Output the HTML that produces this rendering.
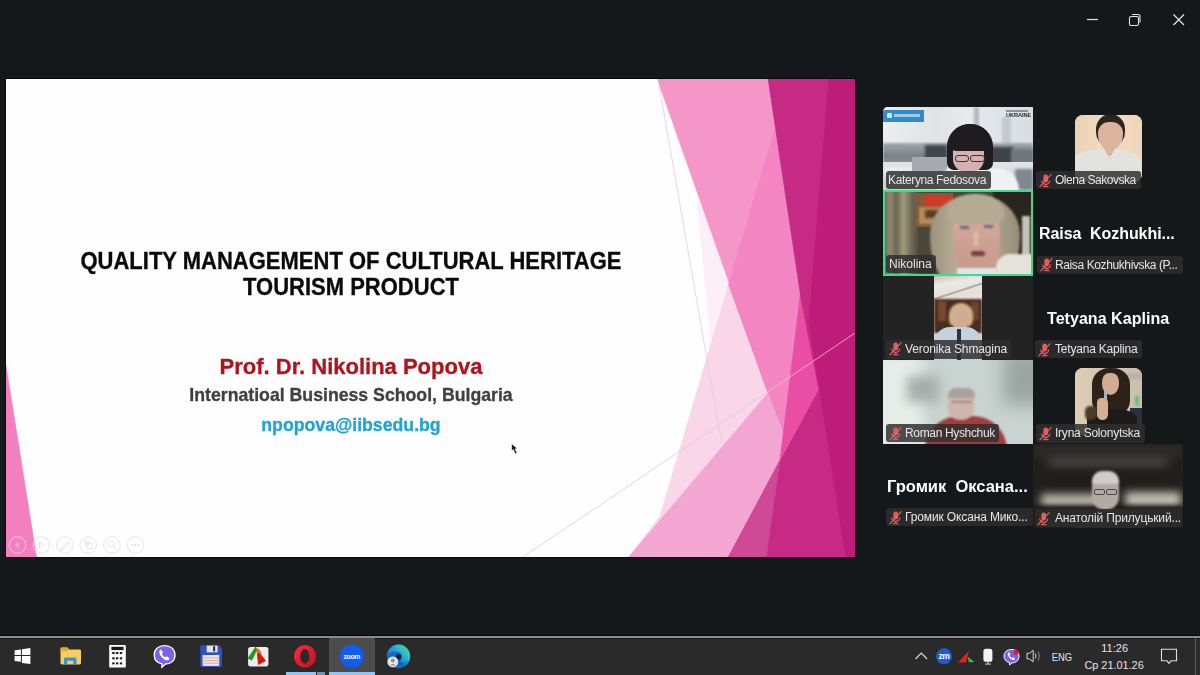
<!DOCTYPE html>
<html><head><meta charset="utf-8">
<style>
*{margin:0;padding:0;box-sizing:border-box}
html,body{width:1200px;height:675px;overflow:hidden;background:#14181b;font-family:"Liberation Sans",sans-serif}
.abs{position:absolute}
#slide{position:absolute;left:5.5px;top:79px;width:849px;height:478px;background:#fefefe;overflow:hidden;box-shadow:0 0 0 1px #090a0b}
#slide svg{position:absolute;left:0;top:0}
.t{position:absolute;white-space:nowrap;font-weight:bold;text-align:center;-webkit-text-stroke:0.3px currentColor;will-change:transform}
.tile{position:absolute;width:150px;height:84px;overflow:hidden}
.lb{position:absolute;background:rgba(46,46,46,0.84);border-radius:3px}
.lt{position:absolute;color:#e6e6e6;white-space:nowrap;will-change:transform}
.bign{position:absolute;color:#fff;font-weight:bold;font-size:16px;white-space:nowrap;will-change:transform}
#taskbar{position:absolute;left:0;top:635px;width:1200px;height:40px;background:#2a2a2a}
</style></head><body>

<!-- window controls -->
<svg class="abs" style="left:1080px;top:8px" width="115" height="24" viewBox="0 0 115 24">
  <line x1="7" y1="11.5" x2="18" y2="11.5" stroke="#e6e6e6" stroke-width="1.2"/>
  <rect x="49.5" y="8.5" width="9" height="9" rx="1.5" fill="none" stroke="#e6e6e6" stroke-width="1.1"/>
  <path d="M52 6.5 h6 a2 2 0 0 1 2 2 v6" fill="none" stroke="#e6e6e6" stroke-width="1.1"/>
  <path d="M93.5 6.5 L104 17 M104 6.5 L93.5 17" stroke="#e6e6e6" stroke-width="1.2"/>
</svg>

<div id="slide">
<svg width="849" height="478" viewBox="6 79 849 478">
  <g stroke-width="0.7" stroke-linejoin="round">
  <polygon points="5,359.5 5,558 36.6,558" fill="#f47fbf" stroke="#f47fbf"/>
  <polygon points="697,200 760,200 760,345 711,345" fill="#fdeff7" stroke="#fdeff7"/>
  <polygon points="728.6,284.6 800,400 740,558 628,558 660,516" fill="#fad6e9" stroke="#fad6e9"/>
  <polygon points="657,78 856,78 856,558 740,558 780,460 768,393" fill="#f596c9" stroke="#f596c9"/>
  <polygon points="775,129 830,129 830,470 780,460 768,393 728.6,284.6" fill="#f285c2" stroke="#f285c2"/>
  <polygon points="628,558 760,558 790,460 782,430 768,393" fill="#f4a6d3" stroke="#f4a6d3"/>
  <polygon points="801,290 840,390 790,470 780,460" fill="#ea4ea4" stroke="#ea4ea4"/>
  <polygon points="768,78 856,78 856,558 728,558 819,390 801,298" fill="#c62a84" stroke="#c62a84"/>
  <polygon points="728,558 766,558 780,460" fill="#cf4996" stroke="#cf4996"/>
  <polygon points="829,78 856,78 856,558 846,558 809,322" fill="#bd1c79" stroke="#bd1c79"/>
  </g>
  <line x1="658" y1="79" x2="722" y2="445" stroke="#e6cbd9" stroke-width="0.8"/>
  <line x1="523" y1="557" x2="855" y2="333" stroke="#dccbd4" stroke-width="0.8"/>
  <g fill="none" stroke="#dedede" stroke-width="0.9" opacity="0.85">
    <circle cx="17.5" cy="545" r="8.3"/><circle cx="41.3" cy="545" r="8.3"/><circle cx="64.8" cy="545" r="8.3"/>
    <circle cx="88.1" cy="545" r="8.3"/><circle cx="111.9" cy="545" r="8.3"/><circle cx="135.6" cy="545" r="8.3"/>
    <path d="M39.5 541.5 l3.5 3.5 l-3.5 3.5z"/>
    <path d="M61 549 l7 -7 l1.2 1.2 l-7 7z M61 549 l-0.6 1.8 l1.8 -0.6"/>
    <rect x="85" y="541.5" width="4" height="4"/><rect x="87" y="543.5" width="5" height="5"/>
    <circle cx="110.8" cy="543.8" r="3.2"/><path d="M113.2 546.2 l3 3"/>
  </g>
  <path d="M15 545 l3.5 -3 v6z" fill="#f6b2d8"/>
  <circle cx="17.5" cy="545" r="8.3" fill="none" stroke="#f9b6da" stroke-width="0.9"/>
  <g fill="#dcdcdc"><circle cx="132.6" cy="545" r="0.9"/><circle cx="135.6" cy="545" r="0.9"/><circle cx="138.6" cy="545" r="0.9"/></g>
  <path d="M511.8 443.9 L511.8 450.8 L513.4 449.3 L515.4 453.8 L516.9 453.1 L514.9 448.8 L517 448.6 Z" fill="#111" stroke="#fff" stroke-width="0.3"/>
</svg>
<div class="t" style="left:0;width:690px;top:170.4px;font-size:22px;line-height:24.06px;color:#0a0a0a;transform:scaleY(1.06);transform-origin:0 0">QUALITY MANAGEMENT OF CULTURAL HERITAGE<br>TOURISM PRODUCT</div>
<div class="t" style="left:0;width:690px;top:275px;font-size:22px;line-height:26px;color:#b0131c">Prof. Dr. Nikolina Popova</div>
<div class="t" style="left:0;width:690px;top:305.9px;font-size:17.7px;line-height:20px;color:#404040">Internatioal Business School, Bulgaria</div>
<div class="t" style="left:0;width:690px;top:335.6px;font-size:17.7px;line-height:20px;color:#1fa3d9">npopova@iibsedu.bg</div>
</div>

<!-- gallery -->
<div id="gallery">
  <!-- T1 Kateryna -->
  <div class="tile" style="left:883px;top:107px;height:83px;border-top-left-radius:5px;background:#e1e4e7">
    <div class="abs" style="left:0;top:0;width:150px;height:42px;background:linear-gradient(90deg,#eceef0 0,#dfe3e6 35%,#e8ebee 55%,#d9dde1 100%)"></div>
    <div class="abs" style="left:91px;top:0;width:5px;height:44px;background:#b3b9bf;filter:blur(0.8px)"></div>
    <div class="abs" style="left:119px;top:10px;width:9px;height:34px;background:#c5cacf;filter:blur(1.2px)"></div>
    <div class="abs" style="left:0;top:36px;width:150px;height:22px;background:linear-gradient(180deg,#a2a8ae,#7a8189 60%,#8d949b);filter:blur(1.2px)"></div>
    <div class="abs" style="left:42px;top:38px;width:22px;height:16px;background:#3f464e;filter:blur(1.5px)"></div>
    <div class="abs" style="left:108px;top:40px;width:22px;height:22px;background:#3c434b;filter:blur(1.5px)"></div>
    <div class="abs" style="left:128px;top:42px;width:22px;height:14px;background:#6f767d;filter:blur(1.5px)"></div>
    <div class="abs" style="left:0;top:55px;width:150px;height:28px;background:linear-gradient(180deg,#e1e4e8,#cdd1d6)"></div>
    <div class="abs" style="left:2px;top:60px;width:30px;height:10px;background:#e9ecef;filter:blur(1px)"></div>
    <div class="abs" style="left:132px;top:62px;width:18px;height:21px;background:#7f8790;filter:blur(1.5px)"></div>
    <div class="abs" style="left:29px;top:50px;width:35px;height:14px;background:#a7aaae;filter:blur(0.5px)"></div>
    <div class="abs" style="left:54px;top:61px;width:82px;height:26px;background:#f0f1f3;border-radius:18px 22px 0 0;filter:blur(0.8px)"></div>
    <div class="abs" style="left:63.5px;top:17px;width:46px;height:46px;background:#1e1c1f;border-radius:50% 50% 14% 14% / 48% 48% 16% 16%;filter:blur(0.6px)"></div>
    <div class="abs" style="left:70px;top:37px;width:31px;height:28px;background:#d4b2b0;border-radius:5px 5px 13px 13px;filter:blur(0.5px)"></div>
    <div class="abs" style="left:67px;top:17px;width:40px;height:27px;background:#1e1c1f;border-radius:50% 50% 3px 6px / 60% 60% 3px 6px;filter:blur(0.4px)"></div>
    <div class="abs" style="left:72px;top:47.5px;width:14px;height:7px;border:1.6px solid #3b2f38;border-radius:3px"></div>
    <div class="abs" style="left:87px;top:47.5px;width:15px;height:7px;border:1.6px solid #3b2f38;border-radius:3px"></div>
    <div class="abs" style="left:0;top:3px;width:41px;height:11.7px;background:#2f8cc7"></div>
    <div class="abs" style="left:4px;top:6px;width:5px;height:5px;background:#cfe6f5;border-radius:1px"></div>
    <div class="abs" style="left:11px;top:7px;width:26px;height:3px;background:#9ccbeb"></div>
    <div class="abs" style="left:123px;top:3px;width:22px;height:1.5px;background:#8f9297"></div>
    <div class="abs" style="left:122.5px;top:5px;width:26px;height:7px;font:bold 5.7px/7px 'Liberation Sans';color:#262a33;letter-spacing:-0.1px;will-change:transform">UKRAINE</div>
  </div>
  <!-- T2 Nikolina -->
  <div class="tile" style="left:883px;top:190px;height:86px;background:#4c463a">
    <div class="abs" style="left:0;top:0;width:35px;height:86px;background:linear-gradient(90deg,#665e4c 0,#958d72 20%,#6a634f 38%,#a39c82 58%,#746c57 80%,#544d40 100%);filter:blur(1.2px)"></div>
    <div class="abs" style="left:110px;top:0;width:40px;height:70px;background:#2a261f;filter:blur(1px)"></div>
    <div class="abs" style="left:139px;top:26px;width:8px;height:40px;background:#c4c3ba;filter:blur(1.2px)"></div>
    <div class="abs" style="left:32px;top:3px;width:38px;height:34px;background:#7d5c38;filter:blur(0.6px)"></div>
    <div class="abs" style="left:41px;top:5px;width:28px;height:12px;background:#cf3a2b;filter:blur(0.9px)"></div>
    <div class="abs" style="left:36px;top:17px;width:28px;height:17px;background:#b58d5c;filter:blur(1.2px)"></div>
    <div class="abs" style="left:42px;top:20px;width:14px;height:8px;background:#5a3a28;filter:blur(1.5px)"></div>
    <div class="abs" style="left:47px;top:4px;width:90px;height:95px;background:linear-gradient(90deg,#9d927d,#b8ad97 30%,#aea38d 70%,#978c78);border-radius:50% 50% 35% 35% / 42% 42% 55% 55%;filter:blur(1.1px)"></div>
    <div class="abs" style="left:70px;top:20px;width:47px;height:68px;background:linear-gradient(180deg,#d6ae9e 0,#cca191 50%,#c49a8a 100%);border-radius:42% 42% 45% 45% / 30% 30% 42% 42%;filter:blur(0.8px)"></div>
    <div class="abs" style="left:64px;top:5px;width:58px;height:29px;background:#b5aa94;border-radius:50% 50% 22% 22% / 70% 70% 30% 30%;filter:blur(0.9px)"></div>
    <div class="abs" style="left:77px;top:36px;width:9px;height:3px;background:#69698a;filter:blur(0.9px)"></div>
    <div class="abs" style="left:101px;top:35px;width:9px;height:3px;background:#69698a;filter:blur(0.9px)"></div>
    <div class="abs" style="left:90px;top:42px;width:6px;height:14px;background:#dcb6a6;filter:blur(1.2px)"></div>
    <div class="abs" style="left:88px;top:61px;width:14px;height:5px;background:#7a3c46;border-radius:3px;filter:blur(0.8px)"></div>
    <div class="abs" style="left:113px;top:64px;width:37px;height:22px;background:#e6e3dc;border-radius:14px 0 0 0;filter:blur(1px)"></div>
    <div class="abs" style="left:74px;top:78px;width:40px;height:8px;background:#dfe5ee;filter:blur(1px)"></div>
    <div class="abs" style="left:0;top:0;width:150px;height:86px;border:2.4px solid #3ddc8a"></div>
  </div>
  <!-- T3 Veronika -->
  <div class="tile" style="left:883px;top:276px;background:#232323">
    <div class="abs" style="left:51.4px;top:0;width:47.6px;height:84px;overflow:hidden;background:#ddd6ce">
      <div class="abs" style="left:0;top:0;width:48px;height:30px;background:linear-gradient(170deg,#c9c0b6 0,#ece8e4 25%,#e4dfda 60%,#f0ece8 100%)"></div>
      <div class="abs" style="left:-5px;top:14px;width:60px;height:1.5px;background:#b5aba0;transform:rotate(-18deg);filter:blur(0.4px)"></div>
      <div class="abs" style="left:0;top:23px;width:48px;height:34px;background:#4b2e22;filter:blur(1px)"></div>
      <div class="abs" style="left:4px;top:25px;width:8px;height:20px;background:#7a4a30;filter:blur(1.2px)"></div>
      <div class="abs" style="left:37px;top:26px;width:8px;height:18px;background:#6c4430;filter:blur(1.2px)"></div>
      <div class="abs" style="left:15px;top:27px;width:24px;height:24px;background:#cdb486;border-radius:50% 50% 30% 30%;filter:blur(0.9px)"></div>
      <div class="abs" style="left:19px;top:34px;width:15px;height:20px;background:#d3a995;border-radius:40%;filter:blur(0.6px)"></div>
      <div class="abs" style="left:0;top:51px;width:48px;height:33px;background:#c3d2de;border-radius:16px 16px 0 0;filter:blur(0.5px)"></div>
      <div class="abs" style="left:23px;top:53px;width:4px;height:31px;background:#2f3136"></div>
    </div>
  </div>
  <!-- T4 Roman -->
  <div class="tile" style="left:883px;top:360px;background:#c9d3cf">
    <div class="abs" style="left:-15px;top:-5px;width:55px;height:94px;background:#e6eeea;filter:blur(7px)"></div>
    <div class="abs" style="left:120px;top:-10px;width:45px;height:55px;background:#9aa5a1;filter:blur(9px)"></div>
    <div class="abs" style="left:24px;top:16px;width:32px;height:26px;background:#a3ada9;filter:blur(6px)"></div>
    <div class="abs" style="left:42px;top:56px;width:82px;height:34px;background:#a33d3d;border-radius:40px 40px 0 0;filter:blur(1px)"></div>
    <div class="abs" style="left:65px;top:29px;width:26px;height:31px;background:#cfb5ab;border-radius:11px 11px 12px 12px;filter:blur(0.8px)"></div>
    <div class="abs" style="left:65px;top:27.5px;width:27px;height:10px;background:#a9a49e;border-radius:14px 14px 4px 4px;filter:blur(0.8px)"></div>
    <div class="abs" style="left:69px;top:41px;width:19px;height:2px;background:#a08c86;filter:blur(0.8px)"></div>
  </div>
  <!-- C2 T1 Olena -->
  <div class="abs" style="left:1075px;top:115px;width:67px;height:67px;border-radius:8px;overflow:hidden;background:#efd7bb">
    <div class="abs" style="left:0;top:0;width:67px;height:67px;background:linear-gradient(90deg,#ecd2b4,#f2dcc2 50%,#eed6ba)"></div>
    <div class="abs" style="left:20.5px;top:-1px;width:29px;height:30px;background:#2b2522;border-radius:50% 50% 30% 30% / 50% 50% 40% 40%"></div>
    <div class="abs" style="left:22.5px;top:7px;width:25px;height:28px;background:#dcb49c;border-radius:45% 45% 50% 50% / 40% 40% 55% 55%;filter:blur(0.4px)"></div>
    <div class="abs" style="left:-4px;top:34px;width:70px;height:45px;background:#e2e3df;border-radius:45% 45% 0 0 / 30% 30% 0 0;filter:blur(0.4px)"></div>
    <div class="abs" style="left:27px;top:30px;width:15px;height:14px;background:#d9b5a0;clip-path:polygon(0 0,100% 0,50% 100%)"></div>
    <div class="abs" style="left:30px;top:34px;width:9px;height:8px;border-bottom:1px solid #f3efe6;border-radius:0 0 50% 50%"></div>
      </div>
  <!-- C2 T4 Iryna -->
  <div class="abs" style="left:1075px;top:368px;width:67px;height:67px;border-radius:8px;overflow:hidden;background:#d8c9b2">
    <div class="abs" style="left:0;top:0;width:67px;height:67px;background:linear-gradient(90deg,#ddcdb4 0,#d6c6ae 45%,#c9bfb0 100%)"></div>
    <div class="abs" style="left:46px;top:5px;width:21px;height:6px;background:#b9b2a6;filter:blur(1px)"></div>
    <div class="abs" style="left:55px;top:40px;width:12px;height:27px;background:#2a3140;filter:blur(0.6px)"></div>
    <div class="abs" style="left:60px;top:28px;width:4px;height:10px;background:#6dbf80;filter:blur(0.8px)"></div>
    <div class="abs" style="left:17px;top:0;width:38px;height:46px;background:#2d2119;border-radius:45% 45% 30% 30% / 35% 35% 30% 30%;filter:blur(0.7px)"></div>
    <div class="abs" style="left:27px;top:5px;width:17px;height:22px;background:#d2ab93;border-radius:40% 40% 50% 50%;filter:blur(0.5px)"></div>
    <div class="abs" style="left:12px;top:41px;width:50px;height:30px;background:#1d1b19;border-radius:40% 40% 0 0 / 35% 35% 0 0;filter:blur(0.5px)"></div>
    <div class="abs" style="left:10px;top:38px;width:12px;height:14px;background:#4a3a2c;border-radius:5px;filter:blur(0.8px)"></div>
    <div class="abs" style="left:22px;top:30px;width:11px;height:22px;background:#d6ae92;border-radius:5px 5px 6px 6px;filter:blur(0.5px)"></div>
    <div class="abs" style="left:29px;top:22px;width:3px;height:10px;background:#a9b0b8;border-radius:1px;filter:blur(0.3px)"></div>
  </div>
  <!-- C2 T5 Anatoliy -->
  <div class="tile" style="left:1033px;top:444px;background:#22211e">
    <div class="abs" style="left:0;top:0;width:150px;height:14px;background:#2b2a27;filter:blur(3px)"></div>
    <div class="abs" style="left:15px;top:13px;width:120px;height:12px;background:#48443d;filter:blur(5px)"></div>
    <div class="abs" style="left:0;top:26px;width:150px;height:20px;background:#1f1e1b;filter:blur(4px)"></div>
    <div class="abs" style="left:8px;top:50px;width:62px;height:13px;background:#bdb8ae;filter:blur(4px)"></div>
    <div class="abs" style="left:92px;top:48px;width:56px;height:15px;background:#c4bfb4;filter:blur(4px)"></div>
    <div class="abs" style="left:0;top:62px;width:150px;height:22px;background:#1c1b19;filter:blur(2px)"></div>
    <div class="abs" style="left:38px;top:65px;width:76px;height:24px;background:#2b2a28;border-radius:30px 30px 0 0;filter:blur(0.8px)"></div>
    <div class="abs" style="left:58.5px;top:30px;width:27px;height:36px;background:#b3aaa5;border-radius:12px 12px 13px 13px;filter:blur(0.8px)"></div>
    <div class="abs" style="left:58.5px;top:27px;width:27px;height:13px;background:#cfcdca;border-radius:13px 13px 4px 4px;filter:blur(0.9px)"></div>
    <div class="abs" style="left:61px;top:45px;width:11px;height:6px;border:1.2px solid #4e4642;border-radius:2px"></div>
    <div class="abs" style="left:73px;top:45px;width:11px;height:6px;border:1.2px solid #4e4642;border-radius:2px"></div>
  </div>

<div class="lb" style="left:885.5px;top:171.2px;width:105.3px;height:17.8px"></div><div class="lt" style="left:888.4px;top:173.14px;font-size:12px;line-height:14.4px;letter-spacing:-0.36px">Kateryna Fedosova</div><div class="lb" style="left:886.0px;top:255.3px;width:50.0px;height:17.4px"></div><div class="lt" style="left:888.5px;top:257.34px;font-size:12px;line-height:14.4px;letter-spacing:0.0px">Nikolina</div><div class="lb" style="left:886.0px;top:339.7px;width:124.7px;height:19.0px"></div><svg class="abs" style="left:888.5px;top:342.3px" width="13" height="14" viewBox="0 0 13 14"><rect x="4.3" y="0.6" width="4.8" height="8" rx="2.4" fill="#e35a5a"/><path d="M2.7 6.4 a4 4 0 0 0 8 0" fill="none" stroke="#e35a5a" stroke-width="1.2"/><rect x="6.1" y="10.2" width="1.3" height="2" fill="#e35a5a"/><rect x="3.9" y="11.9" width="5.6" height="1.3" fill="#e35a5a"/><line x1="0.6" y1="13.2" x2="12.4" y2="0.4" stroke="#e46a6a" stroke-width="1.1"/></svg><div class="lt" style="left:904.5px;top:342.24px;font-size:12px;line-height:14.4px;letter-spacing:-0.12px">Veronika Shmagina</div><div class="lb" style="left:886.0px;top:424.0px;width:112.7px;height:18.0px"></div><svg class="abs" style="left:888.5px;top:426.6px" width="13" height="14" viewBox="0 0 13 14"><rect x="4.3" y="0.6" width="4.8" height="8" rx="2.4" fill="#e35a5a"/><path d="M2.7 6.4 a4 4 0 0 0 8 0" fill="none" stroke="#e35a5a" stroke-width="1.2"/><rect x="6.1" y="10.2" width="1.3" height="2" fill="#e35a5a"/><rect x="3.9" y="11.9" width="5.6" height="1.3" fill="#e35a5a"/><line x1="0.6" y1="13.2" x2="12.4" y2="0.4" stroke="#e46a6a" stroke-width="1.1"/></svg><div class="lt" style="left:905.2px;top:426.34px;font-size:12px;line-height:14.4px;letter-spacing:-0.34px">Roman Hyshchuk</div><div class="lb" style="left:886.0px;top:508.3px;width:146.5px;height:18.2px"></div><svg class="abs" style="left:888.5px;top:510.90000000000003px" width="13" height="14" viewBox="0 0 13 14"><rect x="4.3" y="0.6" width="4.8" height="8" rx="2.4" fill="#e35a5a"/><path d="M2.7 6.4 a4 4 0 0 0 8 0" fill="none" stroke="#e35a5a" stroke-width="1.2"/><rect x="6.1" y="10.2" width="1.3" height="2" fill="#e35a5a"/><rect x="3.9" y="11.9" width="5.6" height="1.3" fill="#e35a5a"/><line x1="0.6" y1="13.2" x2="12.4" y2="0.4" stroke="#e46a6a" stroke-width="1.1"/></svg><div class="lt" style="left:905.0px;top:510.39px;font-size:12px;line-height:14.4px;letter-spacing:-0.13px">Громик Оксана Мико...</div><div class="lb" style="left:1036.0px;top:171.3px;width:105.3px;height:17.4px"></div><svg class="abs" style="left:1038.5px;top:173.9px" width="13" height="14" viewBox="0 0 13 14"><rect x="4.3" y="0.6" width="4.8" height="8" rx="2.4" fill="#e35a5a"/><path d="M2.7 6.4 a4 4 0 0 0 8 0" fill="none" stroke="#e35a5a" stroke-width="1.2"/><rect x="6.1" y="10.2" width="1.3" height="2" fill="#e35a5a"/><rect x="3.9" y="11.9" width="5.6" height="1.3" fill="#e35a5a"/><line x1="0.6" y1="13.2" x2="12.4" y2="0.4" stroke="#e46a6a" stroke-width="1.1"/></svg><div class="lt" style="left:1055.2px;top:173.34px;font-size:12px;line-height:14.4px;letter-spacing:-0.48px">Olena Sakovska</div><div class="lb" style="left:1037.1px;top:255.6px;width:145.9px;height:18.4px"></div><svg class="abs" style="left:1039.6px;top:258.2px" width="13" height="14" viewBox="0 0 13 14"><rect x="4.3" y="0.6" width="4.8" height="8" rx="2.4" fill="#e35a5a"/><path d="M2.7 6.4 a4 4 0 0 0 8 0" fill="none" stroke="#e35a5a" stroke-width="1.2"/><rect x="6.1" y="10.2" width="1.3" height="2" fill="#e35a5a"/><rect x="3.9" y="11.9" width="5.6" height="1.3" fill="#e35a5a"/><line x1="0.6" y1="13.2" x2="12.4" y2="0.4" stroke="#e46a6a" stroke-width="1.1"/></svg><div class="lt" style="left:1055.0px;top:257.64px;font-size:12px;line-height:14.4px;letter-spacing:-0.39px">Raisa Kozhukhivska (P...</div><div class="lb" style="left:1035.4px;top:340.3px;width:106.7px;height:17.3px"></div><svg class="abs" style="left:1037.9px;top:342.90000000000003px" width="13" height="14" viewBox="0 0 13 14"><rect x="4.3" y="0.6" width="4.8" height="8" rx="2.4" fill="#e35a5a"/><path d="M2.7 6.4 a4 4 0 0 0 8 0" fill="none" stroke="#e35a5a" stroke-width="1.2"/><rect x="6.1" y="10.2" width="1.3" height="2" fill="#e35a5a"/><rect x="3.9" y="11.9" width="5.6" height="1.3" fill="#e35a5a"/><line x1="0.6" y1="13.2" x2="12.4" y2="0.4" stroke="#e46a6a" stroke-width="1.1"/></svg><div class="lt" style="left:1054.8px;top:341.94px;font-size:12px;line-height:14.4px;letter-spacing:-0.2px">Tetyana Kaplina</div><div class="lb" style="left:1036.0px;top:424.3px;width:108.7px;height:18.4px"></div><svg class="abs" style="left:1038.5px;top:426.90000000000003px" width="13" height="14" viewBox="0 0 13 14"><rect x="4.3" y="0.6" width="4.8" height="8" rx="2.4" fill="#e35a5a"/><path d="M2.7 6.4 a4 4 0 0 0 8 0" fill="none" stroke="#e35a5a" stroke-width="1.2"/><rect x="6.1" y="10.2" width="1.3" height="2" fill="#e35a5a"/><rect x="3.9" y="11.9" width="5.6" height="1.3" fill="#e35a5a"/><line x1="0.6" y1="13.2" x2="12.4" y2="0.4" stroke="#e46a6a" stroke-width="1.1"/></svg><div class="lt" style="left:1054.9px;top:426.44px;font-size:12px;line-height:14.4px;letter-spacing:-0.23px">Iryna Solonytska</div><div class="lb" style="left:1034.8px;top:508.9px;width:147.7px;height:17.9px"></div><svg class="abs" style="left:1037.3px;top:511.5px" width="13" height="14" viewBox="0 0 13 14"><rect x="4.3" y="0.6" width="4.8" height="8" rx="2.4" fill="#e35a5a"/><path d="M2.7 6.4 a4 4 0 0 0 8 0" fill="none" stroke="#e35a5a" stroke-width="1.2"/><rect x="6.1" y="10.2" width="1.3" height="2" fill="#e35a5a"/><rect x="3.9" y="11.9" width="5.6" height="1.3" fill="#e35a5a"/><line x1="0.6" y1="13.2" x2="12.4" y2="0.4" stroke="#e46a6a" stroke-width="1.1"/></svg><div class="lt" style="left:1055.0px;top:510.64px;font-size:12px;line-height:14.4px;letter-spacing:-0.15px">Анатолій Прилуцький...</div><div class="bign" style="left:1039.4px;top:223.86px;font-size:16px;line-height:19.2px;letter-spacing:-0.07px">Raisa&nbsp; Kozhukhi...</div><div class="bign" style="left:1046.5px;top:309.16px;font-size:16.1px;line-height:19.32px;letter-spacing:0px">Tetyana Kaplina</div><div class="bign" style="left:887.1px;top:476.88px;font-size:16.5px;line-height:19.8px;letter-spacing:0px">Громик&nbsp; Оксана...</div>
</div>
<div id="taskbar">
  <div class="abs" style="left:0;top:0;width:1200px;height:1px;background:#050607"></div>
  <div class="abs" style="left:0;top:1px;width:1200px;height:2px;background:#8c8c8c"></div>
  <div class="abs" style="left:0;top:3px;width:1200px;height:1px;background:#161616"></div>
  <div class="abs" style="left:329px;top:3px;width:46px;height:37px;background:#4c4c4c"></div>
  <div class="abs" style="left:329px;top:37px;width:46px;height:3px;background:#8fc5ee"></div>
  <div class="abs" style="left:286px;top:37px;width:30px;height:3px;background:#8fc5ee"></div>
  <div class="abs" style="left:317px;top:37px;width:8px;height:3px;background:#6d96b4"></div>
  <div class="abs" style="left:1195px;top:3px;width:1px;height:37px;background:#5c5c5c"></div>
</div>
<svg class="abs" style="left:0;top:637px" width="1200" height="38" viewBox="0 637 1200 38">
  <!-- windows logo -->
  <g fill="#ffffff">
    <polygon points="14.6,650.3 20.9,649.4 20.9,655.1 14.6,655.1"/>
    <polygon points="21.9,649.2 30.4,648 30.4,655.1 21.9,655.1"/>
    <polygon points="14.6,656.1 20.9,656.1 20.9,661.8 14.6,661"/>
    <polygon points="21.9,656.1 30.4,656.1 30.4,664.1 21.9,662.9"/>
  </g>
  <!-- folder -->
  <path d="M60.5 649 q0 -1.4 1.4 -1.4 h5.4 l2 1.8 h10.3 q1.4 0 1.4 1.4 v12.3 q0 1.4 -1.4 1.4 h-17.7 q-1.4 0 -1.4 -1.4z" fill="#f6cf5e"/>
  <path d="M60.5 649 q0 -1.4 1.4 -1.4 h5.4 l2 1.8 l-2 1.6 h-6.8z" fill="#e3a92a"/>
  <path d="M64 664.5 v-5.6 q0 -1.4 1.4 -1.4 h9.7 q1.4 0 1.4 1.4 v5.6 h-3.2 v-3.8 h-6.1 v3.8z" fill="#3e8fd3"/>
  <!-- calculator -->
  <rect x="109.2" y="644.9" width="16.6" height="22.7" rx="0.8" fill="#ffffff"/>
  <rect x="111.4" y="646.8" width="12.2" height="3.3" fill="#1a1a1a"/>
  <g fill="#1a1a1a">
    <rect x="112.2" y="652" width="2.4" height="2"/><rect x="115.9" y="652" width="2.4" height="2"/><rect x="119.8" y="652" width="2.4" height="2"/>
    <rect x="112.2" y="657.3" width="2.4" height="2"/><rect x="115.9" y="657.3" width="2.4" height="2"/><rect x="119.8" y="657.3" width="2.4" height="2"/>
    <rect x="112.2" y="662.4" width="2.4" height="2"/><rect x="115.9" y="662.4" width="2.4" height="2"/><rect x="119.8" y="662.4" width="2.4" height="2"/>
  </g>
  <!-- viber -->
  <path d="M164.6 645.6 c6.2 0 10.4 3.6 10.4 9.3 c0 5.6 -4 9.2 -9.8 9.3 l-3.3 3 v-3.3 c-4.6 -1 -7.7 -4.3 -7.7 -9 c0 -5.7 4.2 -9.3 10.4 -9.3z" fill="#7b62e8" stroke="#ffffff" stroke-width="1.3"/>
  <path d="M159.8 650.2 c0.6 -0.6 1.3 -0.6 1.7 0 l1.2 1.7 c0.3 0.5 0.2 1 -0.3 1.4 l-0.5 0.4 c0.6 1.6 1.8 2.9 3.4 3.6 l0.5 -0.5 c0.4 -0.4 0.9 -0.5 1.4 -0.2 l1.7 1.2 c0.6 0.4 0.6 1.1 0 1.7 l-0.8 0.8 c-3.2 0.6 -8.6 -4.4 -8.8 -8.4z" fill="#ffffff"/>
  <!-- floppy -->
  <path d="M200.3 646.3 q0 -1.1 1.1 -1.1 h17.6 l2.9 2.9 v17.7 q0 1.1 -1.1 1.1 h-19.4 q-1.1 0 -1.1 -1.1z" fill="#2f52c6"/>
  <rect x="206.7" y="645.6" width="10.8" height="6.7" fill="#e4e4e4"/>
  <rect x="213" y="646.3" width="2.2" height="5" fill="#2b3560"/>
  <rect x="202.6" y="655" width="16.6" height="10.9" fill="#f3e6e6"/>
  <g fill="#e4aaaa"><rect x="202.6" y="657.3" width="16.6" height="1"/><rect x="202.6" y="660" width="16.6" height="1"/><rect x="202.6" y="662.7" width="16.6" height="1"/></g>
  <!-- faststone -->
  <rect x="248.1" y="647" width="20.3" height="19.4" rx="2.5" fill="#ececec"/>
  <path d="M255.5 646.5 L257.5 649 L252 660.5 L247.5 658.5 Z" fill="#1f9a2a"/>
  <path d="M256.5 648.5 L266 661 L258 665 Z" fill="#d9150e"/>
  <path d="M256 648 L259.5 649.5 L262 654 L256.8 653 Z" fill="#e96a1a"/>
  <!-- opera -->
  <defs><linearGradient id="og" x1="0" y1="0" x2="1" y2="1"><stop offset="0" stop-color="#ff2a3a"/><stop offset="1" stop-color="#c0101e"/></linearGradient></defs><path fill-rule="evenodd" fill="url(#og)" d="M305 645 a11 11.25 0 1 0 0.01 0z M304.8 649 a4.5 7.4 0 1 0 0.01 0z"/>
  <!-- zoom -->
  <circle cx="351.8" cy="656.2" r="11.8" fill="#0d5cf3"/>
  <text x="351.8" y="658.5" text-anchor="middle" font-family="Liberation Sans" font-size="6.8" font-weight="bold" fill="#ffffff" letter-spacing="-0.3">zoom</text>
  <!-- edge -->
  <defs><linearGradient id="eg" x1="0" y1="1" x2="1" y2="0"><stop offset="0" stop-color="#0e4fa8"/><stop offset="0.45" stop-color="#1e8fd8"/><stop offset="0.7" stop-color="#2cc2d0"/><stop offset="1" stop-color="#62dc52"/></linearGradient></defs>
  <circle cx="398.5" cy="656.2" r="11.7" fill="url(#eg)"/>
  <path d="M387 656.5 c1.5 -3.5 5 -5 8.5 -5 c3.5 0 6.5 2.2 6.5 5.5 c0 1.5 -0.8 3 -2.3 3.6 c1.5 1.5 5 1.8 8 0.5 c-2 5 -6.5 7.5 -11 7.2 c-5 -0.3 -9 -4 -9.7 -11.8z" fill="#1466c8"/>
  <ellipse cx="398.6" cy="656.8" rx="2.6" ry="2.9" fill="#1c2630"/>
  <path d="M400 660 c2 1.4 6 1.6 9.3 -0.2 c-0.6 1.8 -2 3.4 -3.6 4.2 c-2 -0.5 -4.5 -1.8 -5.7 -4z" fill="#1a9ad0" opacity="0.6"/>
  <circle cx="392.8" cy="661.9" r="5.4" fill="#e8e8e8"/>
  <circle cx="392.8" cy="660.5" r="2" fill="#8f8f8f"/>
  <path d="M389.3 665.5 q3.5 -3 7 0" fill="#8f8f8f"/>
  <!-- tray -->
  <path d="M915.5 659 L921.3 653 L927.1 659" fill="none" stroke="#d6d6d6" stroke-width="1.2"/>
  <circle cx="944" cy="656.3" r="8" fill="#1d5bd6"/>
  <text x="944" y="659.3" text-anchor="middle" font-family="Liberation Sans" font-size="8.5" font-weight="bold" fill="#ffffff" letter-spacing="-0.3">zm</text>
  <path d="M958.2 662.5 L968.8 651 L966 662.5 Z" fill="#e0231c"/>
  <path d="M967.5 656.5 L974.4 662 L969 662.2 Z" fill="#2fc046"/>
  <rect x="983.4" y="648.8" width="9" height="13" rx="2.6" fill="#f2f2f2"/>
  <rect x="987.3" y="661.5" width="1.3" height="2.4" fill="#cfcfcf"/>
  <rect x="985" y="663.6" width="6" height="1" fill="#cfcfcf"/>
  <path d="M1011.5 649.5 c4.6 0 7.5 2.6 7.5 6.7 c0 4 -2.9 6.6 -7 6.7 l-2.4 2.1 v-2.4 c-3.3 -0.7 -5.6 -3.1 -5.6 -6.4 c0 -4.1 3 -6.7 7.5 -6.7z" fill="#7b62e8" stroke="#ffffff" stroke-width="1"/>
  <path d="M1008 652.8 c0.5 -0.5 1 -0.5 1.3 0 l0.9 1.2 c0.2 0.4 0.1 0.7 -0.2 1 l-0.4 0.3 c0.5 1.2 1.3 2.1 2.5 2.6 l0.4 -0.4 c0.3 -0.3 0.7 -0.4 1 -0.1 l1.2 0.9 c0.4 0.3 0.4 0.8 0 1.2 l-0.6 0.6 c-2.3 0.4 -6.2 -3.2 -6.3 -6.1z" fill="#ffffff"/>
  <circle cx="1016" cy="652" r="2.6" fill="#e8182a"/>
  <path d="M1027 653.3 h2.6 l3.6 -3 v11.6 l-3.6 -3 h-2.6z" fill="none" stroke="#d6d6d6" stroke-width="1"/>
  <path d="M1035.3 653.5 q1.6 2.5 0 5" fill="none" stroke="#d6d6d6" stroke-width="1"/>
  <path d="M1038 651.5 q3 4.5 0 9" fill="none" stroke="#8a8a8a" stroke-width="1"/>
  <path d="M1161.5 649.2 h15 v11.6 h-5.5 l-2 2.6 l-2 -2.6 h-5.5z" fill="none" stroke="#e0e0e0" stroke-width="1.1"/>
  <text x="1051.7" y="660.7" font-family="Liberation Sans" font-size="11.4" fill="#e4e4e4" textLength="20.3" lengthAdjust="spacingAndGlyphs">ENG</text>
  <text x="1101.3" y="651.7" font-family="Liberation Sans" font-size="11" fill="#e4e4e4" textLength="26.7" lengthAdjust="spacingAndGlyphs">11:26</text>
  <text x="1084.4" y="669" font-family="Liberation Sans" font-size="11" fill="#e4e4e4" textLength="59.3" lengthAdjust="spacingAndGlyphs">Ср 21.01.26</text>
</svg>
</body></html>
